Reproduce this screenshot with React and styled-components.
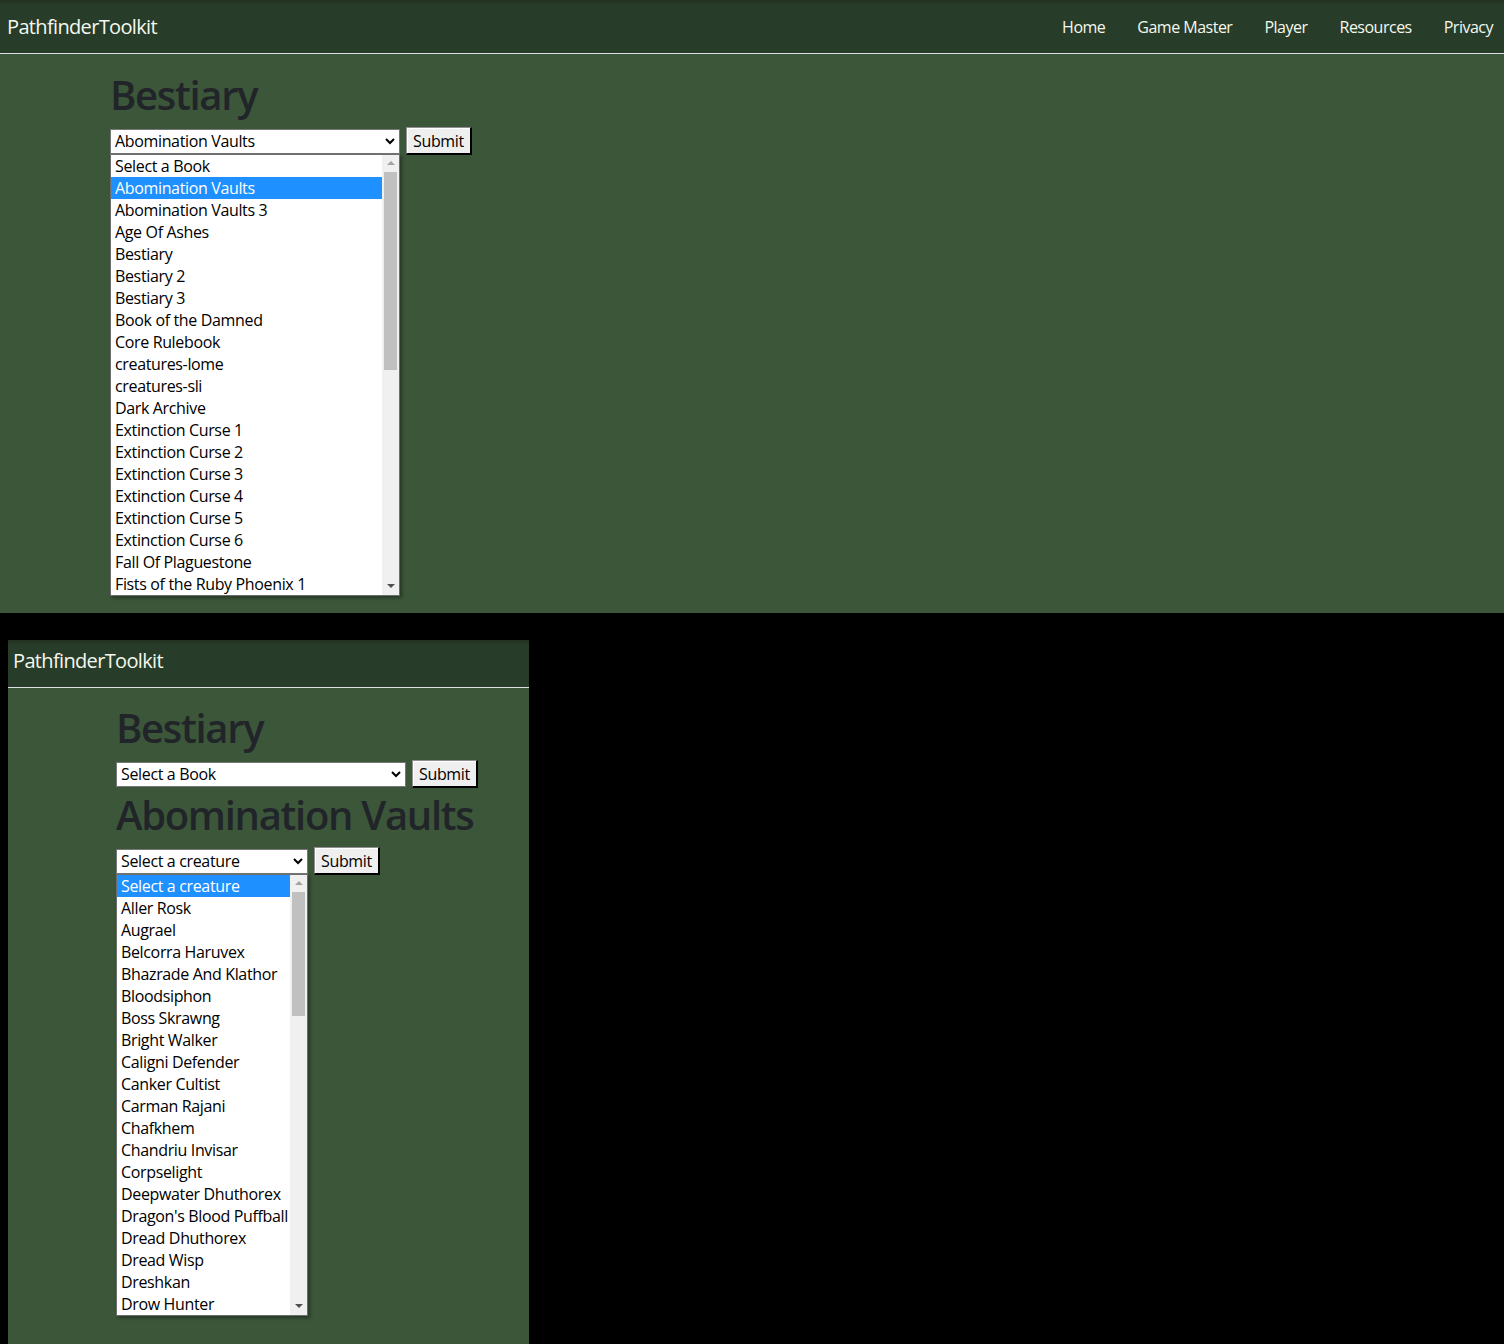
import React from "react";
import styled, { createGlobalStyle } from "styled-components";

const GlobalStyle = createGlobalStyle`
  html, body {
    margin: 0;
    padding: 0;
    background: #000;
  }
  body {
    font-family: "Segoe UI", "Open Sans", "Noto Sans", sans-serif;
    letter-spacing: -0.35px;
    color: #212529;
  }
`;

const books = [
  "Select a Book",
  "Abomination Vaults",
  "Abomination Vaults 3",
  "Age Of Ashes",
  "Bestiary",
  "Bestiary 2",
  "Bestiary 3",
  "Book of the Damned",
  "Core Rulebook",
  "creatures-lome",
  "creatures-sli",
  "Dark Archive",
  "Extinction Curse 1",
  "Extinction Curse 2",
  "Extinction Curse 3",
  "Extinction Curse 4",
  "Extinction Curse 5",
  "Extinction Curse 6",
  "Fall Of Plaguestone",
  "Fists of the Ruby Phoenix 1",
];

const creatures = [
  "Select a creature",
  "Aller Rosk",
  "Augrael",
  "Belcorra Haruvex",
  "Bhazrade And Klathor",
  "Bloodsiphon",
  "Boss Skrawng",
  "Bright Walker",
  "Caligni Defender",
  "Canker Cultist",
  "Carman Rajani",
  "Chafkhem",
  "Chandriu Invisar",
  "Corpselight",
  "Deepwater Dhuthorex",
  "Dragon's Blood Puffball",
  "Dread Dhuthorex",
  "Dread Wisp",
  "Dreshkan",
  "Drow Hunter",
];

const navLinks = ["Home", "Game Master", "Player", "Resources", "Privacy"];

/* layout */
const Page = styled.div`
  background: #3b5639;
  width: ${(p) => p.$width || "100%"};
  height: ${(p) => p.$height}px;
  margin-left: ${(p) => p.$left || 0}px;
  overflow: hidden;
`;

const Gap = styled.div`
  height: 27px;
`;

const Navbar = styled.nav`
  height: ${(p) => p.$height}px;
  box-sizing: border-box;
  display: flex;
  align-items: center;
  justify-content: space-between;
  padding: 0 11px ${(p) => p.$bottom || 0}px ${(p) => p.$pad}px;
  background: linear-gradient(#222f22 0, #283d29 5px, #283d29 100%);
  border-bottom: 1px solid #dee2e6;
`;

const Brand = styled.a`
  font-size: 20px;
  letter-spacing: -0.65px;
  color: #f4f8ee;
  text-decoration: none;
`;

const NavList = styled.ul`
  display: flex;
  gap: 32px;
  margin: 0;
  padding: 0;
  list-style: none;
`;

const NavItem = styled.li`
  font-size: 16px;
  letter-spacing: -0.5px;
  color: #f4f8ee;
`;

const Main = styled.main`
  padding: ${(p) => p.$top}px 0 0 ${(p) => p.$pad}px;
`;

const Title = styled.h1`
  margin: 0 0 8px;
  font-size: 40px;
  line-height: 48px;
  font-weight: 600;
  letter-spacing: -1.3px;
  color: #212529;
`;

const FormRow = styled.form`
  display: flex;
  align-items: center;
  gap: 6px;
  height: 28px;
  margin-bottom: 3px;
`;

/* select */
const SelectWrap = styled.div`
  position: relative;
  flex: none;
`;

const SelectBox = styled.div`
  width: ${(p) => p.$width}px;
  height: 25px;
  box-sizing: border-box;
  display: flex;
  align-items: center;
  justify-content: space-between;
  padding: 0 4px;
  background: #fff;
  border: 1px solid #767676;
  font-size: 16px;
  color: #000;
`;

const Chevron = () => (
  <svg width="10" height="7" viewBox="0 0 10 7">
    <polyline points="1,1 5,5 9,1" fill="none" stroke="#000" strokeWidth="2" />
  </svg>
);

const SubmitButton = styled.button`
  height: 28px;
  padding: 0 6px;
  font-family: inherit;
  letter-spacing: inherit;
  font-size: 16px;
  color: #000;
  background: #efefef;
  border-style: solid;
  border-width: 1px 2px 2px 1px;
  border-color: #8f8f8f #000 #000 #8f8f8f;
  box-shadow: inset 1px 1px 0 #fff;
`;

/* open dropdown popup */
const ListPopup = styled.div`
  position: absolute;
  top: 100%;
  left: 0;
  width: ${(p) => p.$width}px;
  box-sizing: border-box;
  display: flex;
  background: #fff;
  border: 1px solid #6d6d6d;
  box-shadow: 2px 2px 3px rgba(0, 0, 0, 0.35);
  z-index: 2;
`;

const Options = styled.ul`
  flex: 1 1 0;
  min-width: 0;
  overflow: hidden;
  margin: 0;
  padding: 0;
  list-style: none;
`;

const Option = styled.li`
  height: 22px;
  line-height: 22px;
  padding-left: 4px;
  font-size: 16px;
  white-space: nowrap;
  color: ${(p) => (p.$active ? "#fff" : "#000")};
  background: ${(p) => (p.$active ? "#1e90ff" : "transparent")};
`;

const Scrollbar = styled.div`
  flex: none;
  width: 17px;
  background: #f0f0f0;
  display: flex;
  flex-direction: column;
`;

const Arrow = styled.div`
  height: 17px;
  display: flex;
  align-items: center;
  justify-content: center;

  &::after {
    content: "";
    border-left: 4px solid transparent;
    border-right: 4px solid transparent;
    ${(p) =>
      p.$down
        ? "border-top: 4px solid #505050;"
        : "border-bottom: 4px solid #a3a3a3;"}
  }
`;

const Track = styled.div`
  flex: 1;
`;

const Thumb = styled.div`
  width: 13px;
  margin-left: 2px;
  height: ${(p) => p.$height}px;
  background: #c0c0c0;
`;

function Dropdown({ width, value, items, active, thumb }) {
  return (
    <SelectWrap>
      <SelectBox $width={width}>
        <span>{value}</span>
        <Chevron />
      </SelectBox>
      {items && (
        <ListPopup $width={width}>
          <Options>
            {items.map((item, i) => (
              <Option key={item} $active={i === active}>
                {item}
              </Option>
            ))}
          </Options>
          <Scrollbar>
            <Arrow />
            <Track>
              <Thumb $height={thumb} />
            </Track>
            <Arrow $down />
          </Scrollbar>
        </ListPopup>
      )}
    </SelectWrap>
  );
}

export default function App() {
  return (
    <>
      <GlobalStyle />
      <Page $height={613}>
        <Navbar $height={54} $pad={7}>
          <Brand>PathfinderToolkit</Brand>
          <NavList>
            {navLinks.map((l) => (
              <NavItem key={l}>{l}</NavItem>
            ))}
          </NavList>
        </Navbar>
        <Main $pad={110} $top={17}>
          <Title>Bestiary</Title>
          <FormRow>
            <Dropdown
              width={290}
              value="Abomination Vaults"
              items={books}
              active={1}
              thumb={198}
            />
            <SubmitButton type="button">Submit</SubmitButton>
          </FormRow>
        </Main>
      </Page>
      <Gap />
      <Page $width="521px" $left={8} $height={704}>
        <Navbar $height={48} $pad={5} $bottom={7}>
          <Brand>PathfinderToolkit</Brand>
        </Navbar>
        <Main $pad={108} $top={16}>
          <Title>Bestiary</Title>
          <FormRow>
            <Dropdown width={290} value="Select a Book" />
            <SubmitButton type="button">Submit</SubmitButton>
          </FormRow>
          <Title>Abomination Vaults</Title>
          <FormRow>
            <Dropdown
              width={192}
              value="Select a creature"
              items={creatures}
              active={0}
              thumb={124}
            />
            <SubmitButton type="button">Submit</SubmitButton>
          </FormRow>
        </Main>
      </Page>
    </>
  );
}
